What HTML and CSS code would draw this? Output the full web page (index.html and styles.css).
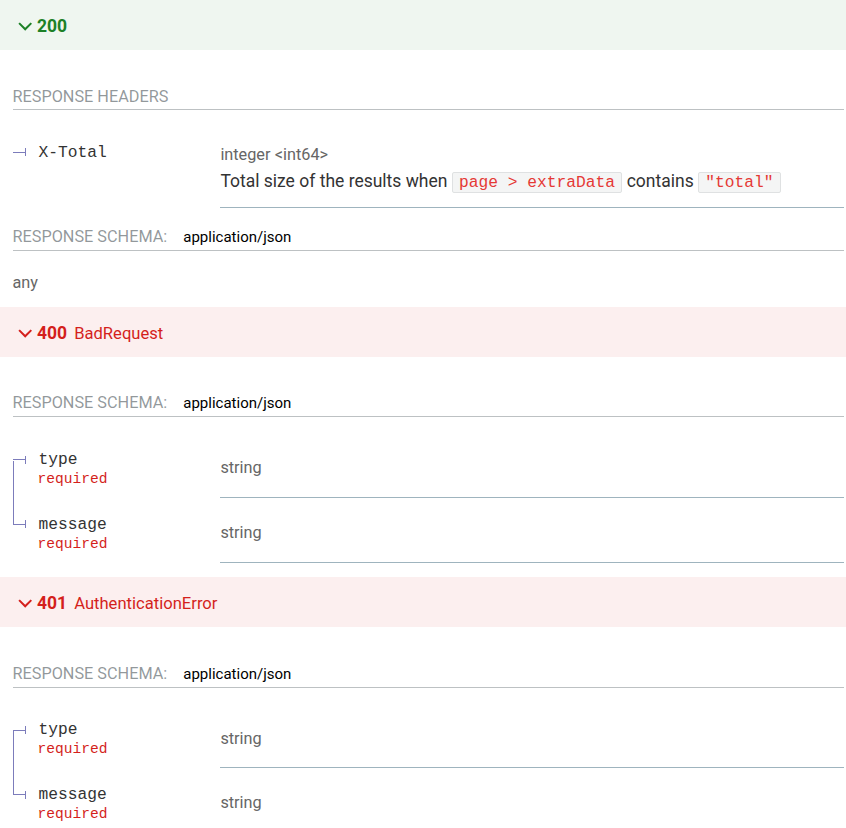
FILE: index.html
```html
<!DOCTYPE html>
<html lang="en">
<head>
<meta charset="utf-8">
<title>Responses</title>
<link rel="stylesheet" href="styles.css">
</head>
<body>
<div class="responses">

  <section class="response success">
    <div class="resp-title">
      <svg class="shelf" viewBox="0 0 24 24" aria-hidden="true"><polygon points="17.3 8.3 12 13.6 6.7 8.3 5.3 9.7 12 16.4 18.7 9.7"/></svg>
      <strong class="status">200</strong>
    </div>
    <div class="resp-details">
      <h5 class="u-header"><span class="u-label">Response Headers</span></h5>
      <table class="props">
        <tbody>
          <tr class="last">
            <td class="pname"><span class="bullet"></span><span class="name">X-Total</span></td>
            <td class="pdetails">
              <div class="type"><span class="tname">integer</span> <span class="tname">&lt;int64&gt;</span></div>
              <div class="desc"><p>Total size of the results when <code>page &gt; extraData</code> contains <code>"total"</code></p></div>
            </td>
          </tr>
        </tbody>
      </table>
      <h5 class="u-header"><span class="u-label">Response Schema:</span><span class="media">application/json</span></h5>
      <div class="any">any</div>
    </div>
  </section>

  <section class="response error">
    <div class="resp-title">
      <svg class="shelf" viewBox="0 0 24 24" aria-hidden="true"><polygon points="17.3 8.3 12 13.6 6.7 8.3 5.3 9.7 12 16.4 18.7 9.7"/></svg>
      <strong class="status">400</strong> <span class="summary">BadRequest</span>
    </div>
    <div class="resp-details">
      <h5 class="u-header"><span class="u-label">Response Schema:</span><span class="media">application/json</span></h5>
      <table class="props">
        <tbody>
          <tr>
            <td class="pname"><span class="bullet"></span><span class="name">type</span><div class="required">required</div></td>
            <td class="pdetails"><div class="type"><span class="tname">string</span></div></td>
          </tr>
          <tr class="last">
            <td class="pname"><span class="bullet"></span><span class="name">message</span><div class="required">required</div></td>
            <td class="pdetails"><div class="type"><span class="tname">string</span></div></td>
          </tr>
        </tbody>
      </table>
    </div>
  </section>

  <section class="response error">
    <div class="resp-title">
      <svg class="shelf" viewBox="0 0 24 24" aria-hidden="true"><polygon points="17.3 8.3 12 13.6 6.7 8.3 5.3 9.7 12 16.4 18.7 9.7"/></svg>
      <strong class="status">401</strong> <span class="summary">AuthenticationError</span>
    </div>
    <div class="resp-details">
      <h5 class="u-header"><span class="u-label">Response Schema:</span><span class="media">application/json</span></h5>
      <table class="props">
        <tbody>
          <tr>
            <td class="pname"><span class="bullet"></span><span class="name">type</span><div class="required">required</div></td>
            <td class="pdetails"><div class="type"><span class="tname">string</span></div></td>
          </tr>
          <tr class="last">
            <td class="pname"><span class="bullet"></span><span class="name">message</span><div class="required">required</div></td>
            <td class="pdetails"><div class="type"><span class="tname">string</span></div></td>
          </tr>
        </tbody>
      </table>
    </div>
  </section>

</div>
</body>
</html>
```

FILE: styles.css
```css
* {
  box-sizing: border-box;
}

html,
body {
  margin: 0;
  padding: 0;
  background: #ffffff;
}

body {
  width: 846px;
  height: 828px;
  overflow: hidden;
  font-family: Roboto, "Liberation Sans", sans-serif;
  font-size: 17.5px;
  line-height: 1.5;
  color: #333333;
}

/* ---------- response title bar ---------- */
.resp-title {
  padding: 14px 12.5px 11px;
  font-size: 16.6px;
  line-height: 25px;
  margin-bottom: 5px;
}

.resp-title::after {
  content: "";
  display: block;
  clear: both;
}

.shelf {
  float: left;
  width: 24.4px;
  height: 24.4px;
  margin-top: 0.3px;
}

.status {
  font-weight: 700;
  font-size: 17.5px;
  margin-right: 3px;
}

.success .resp-title {
  background: rgba(29, 129, 39, 0.07);
  color: #1d8127;
}

.success .shelf {
  fill: #1d8127;
}

.error .resp-title {
  background: rgba(212, 31, 28, 0.07);
  color: #d41f1c;
}

.error .shelf {
  fill: #d41f1c;
}

/* ---------- response body ---------- */
.resp-details {
  padding: 12.5px 2px 14px 12.5px;
}

.u-header {
  margin: 16.26px 0;
  border-bottom: 1px solid rgba(38, 50, 56, 0.3);
  color: rgba(38, 50, 56, 0.5);
  font-weight: normal;
  font-size: 16.26px;
  line-height: 25px;
}

.u-label {
  text-transform: uppercase;
}

.media {
  margin-left: 16px;
  font-size: 15px;
  color: #000000;
}

.any {
  font-size: 16.26px;
  padding-top: 7.4px;
  line-height: 18.25px;
  color: #666666;
}

/* ---------- property table ---------- */
.props {
  width: 100%;
  border-collapse: separate;
  border-spacing: 0;
  font-size: 17.5px;
}

.pname {
  width: 25%;
  vertical-align: top;
  line-height: 24px;
  white-space: nowrap;
  font-size: 16.25px;
  font-family: "Liberation Mono", Courier, monospace;
  color: #333333;
  padding: 14.5px 12.5px 11.5px 0;
  border-left: 1px solid #7c7cbb;
}

tr:first-of-type > .pname,
tr.last > .pname {
  border-left-width: 0;
  background-position: top left;
  background-repeat: no-repeat;
  background-size: 1px 100%;
}

tr:first-of-type > .pname {
  background-image: linear-gradient(to bottom, transparent 0, transparent 27px, #7c7cbb 27px, #7c7cbb 100%);
}

tr.last > .pname {
  background-image: linear-gradient(to bottom, #7c7cbb 0, #7c7cbb 27px, transparent 27px, transparent 100%);
}

tr.last:first-child > .pname {
  background: none;
}

.bullet {
  margin-right: 12.5px;
}

.bullet::before {
  content: "";
  display: inline-block;
  vertical-align: middle;
  width: 12.5px;
  height: 1px;
  background: #7c7cbb;
}

.bullet::after {
  content: "";
  display: inline-block;
  vertical-align: middle;
  width: 1px;
  height: 8px;
  background: #7c7cbb;
}

.required {
  margin-left: 25px;
  font-size: 14.6px;
  line-height: 1;
  color: #d41f1c;
}

.pdetails {
  width: 75%;
  padding: 15px 0 10px;
  border-bottom: 1px solid #9fb4be;
}

.type {
  line-height: 26.25px;
}

.tname {
  font-size: 16.25px;
  color: #666666;
}

.desc p {
  margin: 0;
  font-size: 17.5px;
  line-height: 26.25px;
  color: #333333;
}

.desc code {
  font-family: "Liberation Mono", Courier, monospace;
  font-size: 16.25px;
  color: #e53935;
  background: rgba(38, 50, 56, 0.05);
  border: 1px solid rgba(38, 50, 56, 0.1);
  border-radius: 2px;
  padding: 0 6.25px;
}
```
